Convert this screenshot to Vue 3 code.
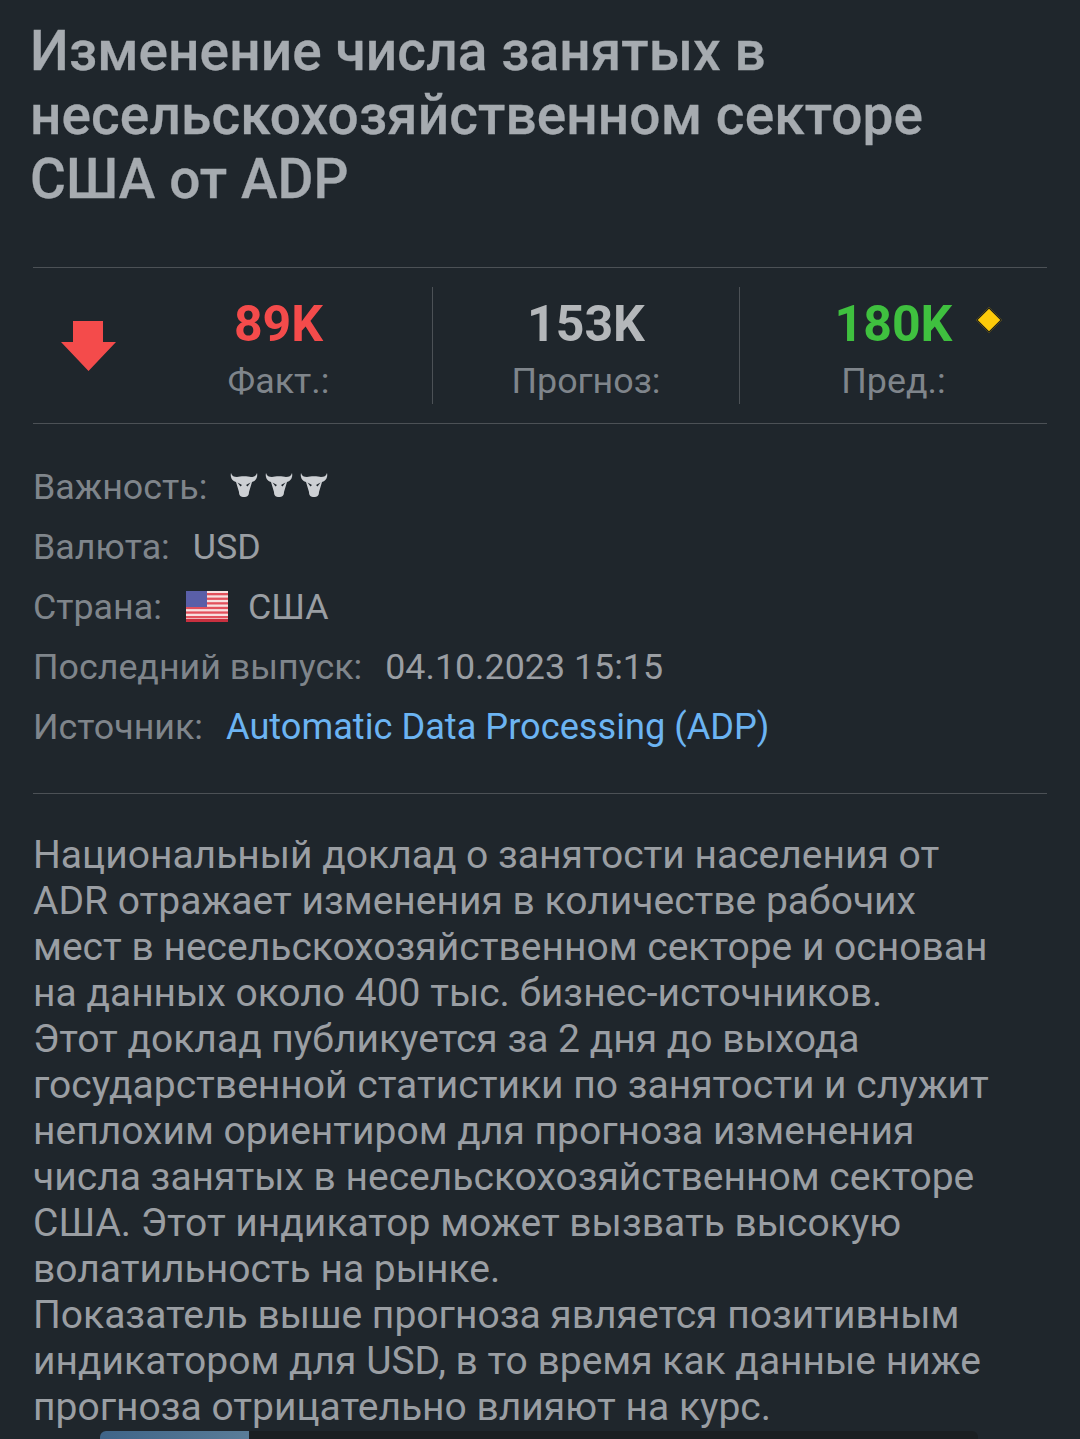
<template>
  <div class="page">
    <h1 class="title">Изменение числа занятых в несельскохозяйственном секторе США от ADP</h1>

    <div class="stats">
      <div class="arrow-cell">
        <svg width="55" height="50" viewBox="0 0 55 50">
          <path d="M12 0H42V21H55L27.5 50L0 21H12Z" fill="#f44b4b" />
        </svg>
      </div>
      <div class="stat">
        <div class="stat-value red">89K</div>
        <div class="stat-label">Факт.:</div>
      </div>
      <div class="stat">
        <div class="stat-value">153K</div>
        <div class="stat-label">Прогноз:</div>
      </div>
      <div class="stat">
        <div class="stat-value green">
          180K
          <span class="diamond"></span>
        </div>
        <div class="stat-label">Пред.:</div>
      </div>
    </div>

    <div class="info">
      <div class="info-row">
        <span class="info-label">Важность:</span>
        <span class="bulls">
          <svg v-for="n in 3" :key="n" width="28" height="26" viewBox="0 0 28 26">
            <path
              d="M1 1C0 5 2 9 6 10L9 20C9 24 11 25 14 25C17 25 19 24 19 20L22 10C26 9 28 5 27 1C26 4 24 5 21 5C18 4 10 4 7 5C4 5 2 4 1 1Z"
              fill="#cdd0d4"
            />
            <path d="M7.5 10.5L12 13L10.5 14.5ZM20.5 10.5L16 13L17.5 14.5Z" fill="#1f262c" />
          </svg>
        </span>
      </div>
      <div class="info-row">
        <span class="info-label">Валюта:</span>
        <span class="info-value">USD</span>
      </div>
      <div class="info-row">
        <span class="info-label">Страна:</span>
        <svg class="flag" width="42" height="31" viewBox="0 0 42 31">
          <rect width="42" height="31" fill="#f7e0e0" />
          <rect v-for="s in stripes" :key="s" x="0" :y="s" width="42" height="2.3" fill="#e2505c" />
          <rect x="0" y="0" width="21" height="16" fill="#5a5fa8" />
          <rect x="0" y="28" width="42" height="3" fill="#c8303f" />
        </svg>
        <span class="info-value">США</span>
      </div>
      <div class="info-row">
        <span class="info-label">Последний выпуск:</span>
        <span class="info-value">04.10.2023 15:15</span>
      </div>
      <div class="info-row">
        <span class="info-label">Источник:</span>
        <span class="info-link">Automatic Data Processing (ADP)</span>
      </div>
    </div>

    <p class="desc">
      Национальный доклад о занятости населения от<br />
      ADR отражает изменения в количестве рабочих<br />
      мест в несельскохозяйственном секторе и основан<br />
      на данных около 400 тыс. бизнес-источников.<br />
      Этот доклад публикуется за 2 дня до выхода<br />
      государственной статистики по занятости и служит<br />
      неплохим ориентиром для прогноза изменения<br />
      числа занятых в несельскохозяйственном секторе<br />
      США. Этот индикатор может вызвать высокую<br />
      волатильность на рынке.<br />
      Показатель выше прогноза является позитивным<br />
      индикатором для USD, в то время как данные ниже<br />
      прогноза отрицательно влияют на курс.
    </p>

    <div class="next-card">
      <div class="thumb"></div>
    </div>
  </div>
</template>

<script setup>
const stripes = [2, 6.6, 11.2, 15.8, 20.4, 25];
</script>

<style>
html,
body {
  background: #1f262c;
}
</style>

<style scoped>
.page {
  position: relative;
  height: 1439px;
  overflow: hidden;
  box-sizing: border-box;
  padding: 19px 33px 0;
  background: #1f262c;
  font-family: Roboto, "Liberation Sans", sans-serif;
  color: #9a9ea3;
}

.title {
  margin: 0 0 0 -3px;
  width: 960px;
  font-size: 55px;
  font-weight: 500;
  line-height: 64px;
  letter-spacing: 0.1px;
  -webkit-text-stroke: 0.3px #a6abb0;
  color: #a6abb0;
}

.stats {
  margin-top: 56px;
  height: 155px;
  display: grid;
  grid-template-columns: 92px 308px 307px 1fr;
  align-items: center;
  border-top: 1px solid #4c5156;
  border-bottom: 1px solid #4c5156;
}

.arrow-cell {
  padding-left: 28px;
  padding-top: 4px;
}

.stat {
  height: 117px;
  display: flex;
  flex-direction: column;
  align-items: center;
  border-right: 1px solid #4c5156;
}

.stat:last-child {
  border-right: 0;
}

.stat-value {
  position: relative;
  font-size: 50px;
  font-weight: 700;
  line-height: 60px;
  margin-top: 7px;
  color: #b4b7ba;
}

.stat-value.red {
  color: #f44b4b;
}

.stat-value.green {
  color: #3fc03f;
}

.diamond {
  position: absolute;
  left: 145px;
  top: 17px;
  width: 18px;
  height: 18px;
  background: #fdcb0a;
  border: 1px solid #15181b;
  box-sizing: border-box;
  transform: rotate(45deg);
}

.stat-label {
  font-size: 35.8px;
  line-height: 42px;
  margin-top: 6px;
  color: #7f858b;
}

.info {
  padding: 33px 0 36px;
  border-bottom: 1px solid #4c5156;
  font-size: 35.8px;
}

.info-row {
  height: 60px;
  display: flex;
  align-items: center;
}

.info-label {
  color: #7f858b;
  margin-right: 23px;
}

.info-value {
  color: #9a9ea3;
}

.info-link {
  font-size: 36.2px;
  margin-bottom: 2px;
  color: #6cb4f2;
}

.bulls {
  display: flex;
  gap: 7px;
  margin-bottom: 4px;
}

.flag {
  margin-right: 20px;
  margin-bottom: 2px;
  margin-left: 1px;
}

.desc {
  margin: 38px 0 0;
  font-size: 39px;
  line-height: 46px;
  white-space: nowrap;
  color: #9a9ea3;
}

.next-card {
  position: absolute;
  left: 100px;
  top: 1431px;
  width: 878px;
  height: 8px;
  border-radius: 6px 6px 0 0;
  overflow: hidden;
  background: #1b1f22;
}

.thumb {
  width: 149px;
  height: 8px;
  background: linear-gradient(90deg, #3f6488, #4d7190 55%, #5a7c98);
}
</style>
